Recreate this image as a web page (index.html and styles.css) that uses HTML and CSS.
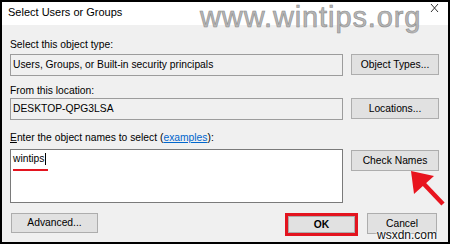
FILE: index.html
```html
<!DOCTYPE html>
<html>
<head>
<meta charset="utf-8">
<link rel="stylesheet" href="styles.css">
</head>
<body>
<div class="window">
  <div class="titlebar"><span class="title">Select Users or Groups</span></div>
  <div class="content">
    <div class="label label-first">Select this object type:</div>
    <div class="row">
      <div class="field">Users, Groups, or Built-in security principals</div>
      <div class="btn">Object Types...</div>
    </div>
    <div class="label label-second">From this location:</div>
    <div class="row">
      <div class="field">DESKTOP-QPG3LSA</div>
      <div class="btn">Locations...</div>
    </div>
    <div class="label label-third"><span class="accel">E</span>nter the object names to select (<span class="link">examples</span>):</div>
    <div class="row row-top">
      <div class="area"><span class="typed">wintips</span><span class="caret"></span></div>
      <div class="btn btn-check">Check Names</div>
    </div>
    <div class="footer">
      <div class="btn btn-adv">Advanced...</div>
      <div class="spacer"></div>
      <div class="ok-mark"><div class="btn btn-ok">OK</div></div>
      <div class="btn btn-cancel">Cancel</div>
    </div>
  </div>
</div>
<div class="watermark">www.wintips.org</div>
<svg class="close" width="9" height="10" viewBox="0 0 9 10"><path d="M1 1 L8 9 M8 1 L1 9" stroke="#333" stroke-width="1" fill="none"/></svg>
<div class="red-underline"></div>
<svg class="arrow" width="450" height="244" viewBox="0 0 450 244">
  <line x1="423" y1="183" x2="443" y2="204" stroke="#e8141e" stroke-width="4.5"/>
  <polygon points="411,171 414,194 434,176" fill="#e8141e"/>
</svg>
<div class="wsxdn">wsxdn.com</div>
</body>
</html>
```
FILE: styles.css
```css
html, body {
  margin: 0;
  padding: 0;
}
body {
  position: relative;
  width: 450px;
  height: 244px;
  overflow: hidden;
  font-family: "Liberation Sans", Arial, sans-serif;
  font-size: 10.3px;
  color: #000;
}
.window {
  box-sizing: border-box;
  width: 450px;
  height: 244px;
  border: 2px solid #000;
  background: #f0f0f0;
  display: flex;
  flex-direction: column;
}
.titlebar {
  height: 23px;
  background: #fff;
  flex: none;
}
.title {
  display: block;
  padding-left: 6px;
  font-size: 11px;
  line-height: 21px;
  color: #000;
}
.content {
  padding: 13px 9px 0 8px;
  display: flex;
  flex-direction: column;
}
.label {
  line-height: 13px;
  height: 13px;
  white-space: nowrap;
}
.label-first { margin-bottom: 3px; }
.label-second { margin-top: 8px; margin-bottom: 1px; }
.label-third { margin-top: 11px; margin-bottom: 5px; }
.accel { text-decoration: underline; }
.link {
  color: #0066cc;
  text-decoration: underline;
}
.row {
  display: flex;
  gap: 8px;
  align-items: flex-start;
}
.field {
  flex: 1;
  box-sizing: border-box;
  height: 22px;
  border: 1px solid #9c9c9c;
  background: #f0f0f0;
  padding: 0 2px;
  line-height: 20px;
  white-space: nowrap;
}
.btn {
  box-sizing: border-box;
  width: 88px;
  height: 21px;
  border: 1px solid #adadad;
  background: #e1e1e1;
  text-align: center;
  line-height: 19px;
  white-space: nowrap;
  flex: none;
}
.area {
  flex: 1;
  box-sizing: border-box;
  height: 54px;
  border: 1px solid #7a7a7a;
  background: #fff;
  padding: 2px 2px;
  line-height: 13px;
  display: flex;
  align-items: flex-start;
}
.caret {
  display: inline-block;
  width: 1px;
  height: 12px;
  background: #000;
  margin-left: 1px;
  margin-top: 1px;
}
.btn-check { margin-top: 1px; }
.footer {
  margin-top: 10px;
  display: flex;
  align-items: flex-start;
}
.spacer { flex: 1; }
.btn-adv {
  width: 87px;
  height: 20px;
  line-height: 18px;
  margin-left: 1px;
}
.ok-mark {
  box-sizing: border-box;
  width: 73px;
  height: 23px;
  border: 3px solid #e3141f;
  margin-right: 9px;
}
.btn-ok {
  width: 100%;
  height: 100%;
  line-height: 15px;
  font-weight: bold;
}
.btn-cancel {
  width: 70px;
  margin-right: 2px;
}
.watermark {
  position: absolute;
  left: 200px;
  top: 0;
  font-family: "Liberation Sans", Arial, sans-serif;
  font-size: 29px;
  line-height: 34px;
  letter-spacing: 0.9px;
  color: #b6b6b6;
  -webkit-text-stroke: 0.6px #8c8c8c;
  white-space: nowrap;
}
.close {
  position: absolute;
  left: 430px;
  top: 3px;
}
.red-underline {
  position: absolute;
  left: 13px;
  top: 169px;
  width: 35px;
  height: 2px;
  background: #e3141f;
}
.arrow {
  position: absolute;
  left: 0;
  top: 0;
}
.wsxdn {
  position: absolute;
  left: 377px;
  top: 229px;
  font-family: "Liberation Sans", Arial, sans-serif;
  font-size: 12px;
  line-height: 12px;
  color: #111;
  text-shadow: 0 0 2px #fff, 0 0 2px #fff, 0 0 3px #fff;
  white-space: nowrap;
}
```
